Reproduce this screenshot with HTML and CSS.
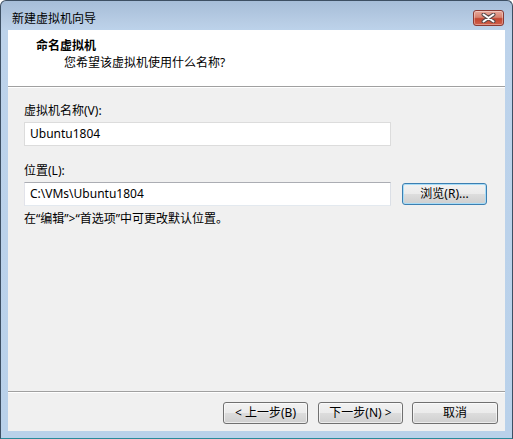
FILE: index.html
```html
<!DOCTYPE html>
<html lang="zh-CN">
<head>
    <meta charset="UTF-8">
    <title>新建虚拟机向导</title>
    <link rel="stylesheet" href="styles.css">
</head>
<body>
    <div class="window">
        <div class="titlebar">
            <span class="title-text">新建虚拟机向导</span>
            <div class="close-btn">
                <svg width="15" height="10" viewBox="0 0 15 10">
                    <path d="M2.5 1.5 L12.5 8.5 M12.5 1.5 L2.5 8.5" stroke="#5a4a4a" stroke-width="4" stroke-linecap="round"/>
                    <path d="M2.5 1.5 L12.5 8.5 M12.5 1.5 L2.5 8.5" stroke="#ffffff" stroke-width="2" stroke-linecap="round"/>
                </svg>
            </div>
        </div>

        <div class="client">
            <div class="header">
                <div class="header-title">命名虚拟机</div>
                <div class="header-sub">您希望该虚拟机使用什么名称?</div>
            </div>

            <div class="body">
                <div class="label">虚拟机名称(V):</div>
                <div class="textbox textbox-name">Ubuntu1804</div>

                <div class="label label-gap">位置(L):</div>
                <div class="path-row">
                    <div class="textbox textbox-path">C:\VMs\Ubuntu1804</div>
                    <div class="btn btn-browse">浏览(R)...</div>
                </div>
                <div class="note">在“编辑”&gt;“首选项”中可更改默认位置。</div>
            </div>

            <div class="footer">
                <div class="btn btn-back">&lt; 上一步(B)</div>
                <div class="btn btn-next">下一步(N) &gt;</div>
                <div class="btn btn-cancel">取消</div>
            </div>
        </div>
    </div>
</body>
</html>
```

FILE: styles.css
```css
* {
    margin: 0;
    padding: 0;
    box-sizing: border-box;
}

body {
    width: 513px;
    height: 439px;
    overflow: hidden;
    background-color: #ffffff;
    font-family: "Noto Sans", "Noto Sans CJK SC", sans-serif;
    font-size: 12px;
    color: #000;
}

.window {
    width: 513px;
    height: 439px;
    border: 1px solid #3d4f63;
    border-bottom-color: #2a8a9a;
    border-radius: 6px 6px 0 0;
    background: linear-gradient(to bottom, #a6bdd8 0px, #b7cce4 20px, #bdd3eb 30px, #b9d1ea 100%);
    display: flex;
    flex-direction: column;
}

.titlebar {
    height: 29px;
    display: flex;
    align-items: flex-start;
    justify-content: space-between;
    padding: 0 8px 0 11px;
}

.title-text {
    margin-top: 9px;
    line-height: 17px;
}

.close-btn {
    margin-top: 9px;
    width: 31px;
    height: 16px;
    border: 1px solid #8a3a33;
    border-radius: 3px;
    background: linear-gradient(to bottom, #e8a89a 0%, #d7826f 45%, #c2452f 55%, #d0614c 100%);
    box-shadow: inset 0 0 0 1px rgba(255,255,255,0.35);
    display: flex;
    align-items: center;
    justify-content: center;
}

.client {
    flex: 1;
    margin: 0 7px 7px 7px;
    background-color: #f0f0f0;
    display: flex;
    flex-direction: column;
}

.header {
    height: 57px;
    background-color: #fff;
    border-bottom: 1px solid #a0a0a0;
    box-shadow: 0 1px 0 #ffffff;
    padding: 7px 0 0 28px;
}

.header-title {
    font-weight: bold;
    line-height: 17px;
}

.header-sub {
    padding-left: 28px;
    line-height: 17px;
}

.body {
    flex: 1;
    padding: 16px 0 0 16px;
    border-bottom: 1px solid #a0a0a0;
}

.label {
    line-height: 16px;
}

.label-gap {
    margin-top: 17px;
}

.textbox {
    width: 367px;
    height: 24px;
    margin-top: 3px;
    background-color: #fff;
    padding: 0 5px;
    line-height: 22px;
    border: 1px solid #dcdcdc;
}

.textbox-path {
    border-color: #abadb3 #dbdfe6 #e3e9ef #e2e3ea;
}

.path-row {
    display: flex;
    align-items: flex-start;
}

.btn {
    height: 22px;
    border: 1px solid #707070;
    border-radius: 3px;
    background: linear-gradient(to bottom, #f2f2f2 0%, #ebebeb 49%, #dddddd 50%, #cfcfcf 100%);
    box-shadow: inset 0 0 0 1px rgba(255,255,255,0.6);
    display: flex;
    align-items: center;
    justify-content: center;
    line-height: 16px;
}

.btn-browse {
    width: 85px;
    margin: 4px 0 0 11px;
    border-color: #3c7fb1;
    box-shadow: inset 0 0 0 1px #a8dcf7;
}

.note {
    margin-top: 5px;
    line-height: 16px;
}

.footer {
    height: 39px;
    border-top: 1px solid #ffffff;
    display: flex;
    justify-content: flex-end;
    align-items: flex-start;
    padding: 9px 7px 0 0;
}

.btn-back {
    width: 85px;
}

.btn-next {
    width: 85px;
    margin-left: 10px;
}

.btn-cancel {
    width: 86px;
    margin-left: 9px;
}
```
